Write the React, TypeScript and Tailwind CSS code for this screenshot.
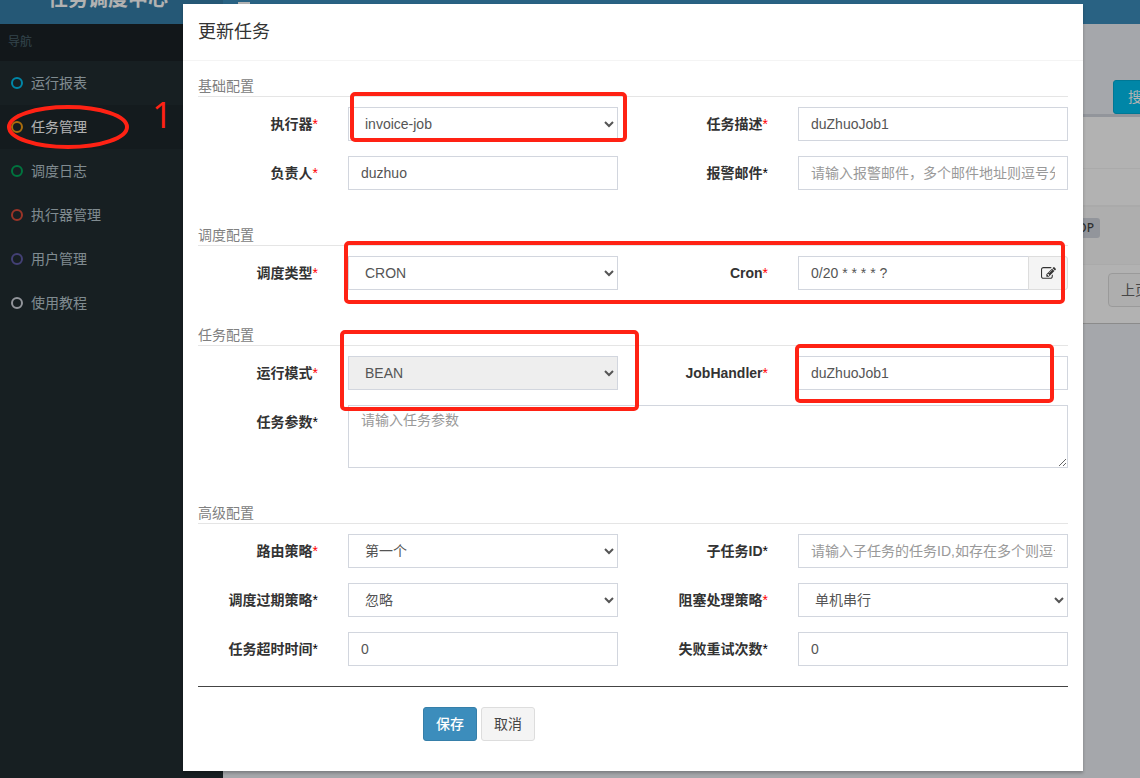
import React, { useState } from 'react';

const controlClass =
  'block w-full h-[34px] border border-[#d2d6de] bg-white px-3 py-1.5 text-sm leading-5 text-[#555] placeholder:text-[#999] placeholder:opacity-100 outline-none disabled:bg-[#eee] disabled:opacity-100';

const menuItems = [
  { label: '运行报表', color: 'border-[#00c0ef]' },
  { label: '任务管理', color: 'border-[#f39c12]', active: true },
  { label: '调度日志', color: 'border-[#00a65a]' },
  { label: '执行器管理', color: 'border-[#dd4b39]' },
  { label: '用户管理', color: 'border-[#605ca8]' },
  { label: '使用教程', color: 'border-[#d2d6de]' },
];

// Red hand-drawn frame laid over a control or a row
const Mark = ({ className }: { className: string }) => (
  <span
    aria-hidden="true"
    className={`pointer-events-none absolute z-10 rounded-[5px] border-4 border-[#ff2214] ${className}`}
  />
);

type FieldProps = {
  id: string;
  label: string;
  required?: boolean;
  wide?: boolean;
  mark?: string;
  children: React.ReactNode;
};

const Field = ({ id, label, required, wide, mark, children }: FieldProps) => (
  <>
    <label
      htmlFor={id}
      className="col-span-2 px-[15px] pt-[7px] text-right font-bold leading-5 text-[#333] whitespace-nowrap"
    >
      {label}
      <span className={`font-normal ${required ? 'text-[red]' : 'text-black'}`}>*</span>
    </label>
    <div className={`px-[15px] ${wide ? 'col-span-10' : 'col-span-4'}`}>
      <div className="relative">
        {children}
        {mark && <Mark className={mark} />}
      </div>
    </div>
  </>
);

const Row = ({ children }: { children: React.ReactNode }) => (
  <div className="relative -mx-[15px] mb-[15px] grid grid-cols-12">{children}</div>
);

const Section = ({ title, children }: { title: string; children: React.ReactNode }) => (
  <section className="pb-5">
    <h5 className="mb-2.5 border-b border-[#e5e5e5] text-sm leading-5 text-[#808080]">{title}</h5>
    {children}
  </section>
);

const EditIcon = () => (
  <svg viewBox="0 0 1792 1792" className="size-[15px] fill-[#333]" aria-hidden="true">
    <path d="M888 1184l116-116-152-152-116 116v56h96v96h56zm440-720q-16-16-33 1l-350 350q-17 17-1 33t33-1l350-350q17-17 1-33zm80 594v190q0 119-84.5 203.5t-203.5 84.5h-832q-119 0-203.5-84.5t-84.5-203.5v-832q0-119 84.5-203.5t203.5-84.5h832q63 0 117 25 15 7 18 23 3 17-9 29l-49 49q-14 14-32 8-23-6-45-6h-832q-66 0-113 47t-47 113v832q0 66 47 113t113 47h832q66 0 113-47t47-113v-126q0-13 9-22l64-64q15-15 35-7t20 29zm-96-738l288 288-672 672h-288v-288zm444 132l-92 92-288-288 92-92q28-28 68-28t68 28l152 152q28 28 28 68t-28 68z" />
  </svg>
);

const Sidebar = () => (
  <aside className="w-[223px] shrink-0 bg-[#222d32]">
    <div className="bg-[#1a2226] px-2 py-2.5 text-xs leading-[17px] text-[#4b646f]">导航</div>
    <nav>
      {menuItems.map((item) => (
        <a
          key={item.label}
          href="#"
          className={`flex h-11 items-center gap-2 pl-[11px] text-sm ${
            item.active ? 'bg-[#1e282c] text-white' : 'text-[#b8c7ce]'
          }`}
        >
          <span className={`size-3 rounded-full border-2 ${item.color}`} />
          {item.label}
        </a>
      ))}
    </nav>
  </aside>
);

// Job list behind the dialog
const JobList = () => (
  <main className="min-w-0 flex-1 overflow-hidden bg-[#ecf0f5] pt-14 pl-[15px]">
    <div className="flex justify-end">
      <button className="-mr-[93px] h-[34px] w-[120px] shrink-0 rounded-[3px] border border-[#00acd6] bg-[#00c0ef] px-3.5 text-left text-sm text-white">
        搜索
      </button>
    </div>
    <div className="border-t-[3px] border-b border-t-[#d2d6de] border-b-[#c8c8c8] bg-white">
      <div className="h-[52px] border-b border-[#f4f4f4]" />
      <div className="h-[38px] border-b-2 border-[#f4f4f4]" />
      <div className="flex h-[58px] items-start justify-end border-b border-[#f4f4f4] bg-[#f9f9f9] pt-[11px] pr-10">
        <span className="rounded-[3px] bg-[#d2d6de] px-1.5 font-['Noto_Sans',sans-serif] text-xs leading-5 font-medium text-[#444]">
          STOP
        </span>
      </div>
      <div className="flex justify-end pt-2 pb-4">
        <button className="-mr-[30px] h-[34px] w-[62px] shrink-0 rounded-[4px] border border-[#ddd] bg-[#fafafa] px-3 text-left text-sm whitespace-nowrap text-[#666]">
          上页
        </button>
      </div>
    </div>
  </main>
);

const JobDialog = () => {
  const [executor, setExecutor] = useState('invoice-job');
  const [schedule, setSchedule] = useState('CRON');

  return (
    <div
      role="dialog"
      aria-labelledby="dialog-title"
      className="mt-1 mr-[57px] ml-[183px] min-w-0 flex-1 self-start bg-white shadow-[0_2px_3px_rgba(0,0,0,0.25)]"
    >
      <div className="border-b border-[#f4f4f4] p-[15px]">
        <h4 id="dialog-title" className="text-lg leading-[26px] text-[#333]">
          更新任务
        </h4>
      </div>

      <form className="p-[15px] pb-[30px]" onSubmit={(e) => e.preventDefault()}>
        <Section title="基础配置">
          <Row>
            <Field id="executor" label="执行器" required mark="-top-[15px] -right-[9px] -bottom-px left-[2px]">
              <select
                id="executor"
                className={controlClass}
                value={executor}
                onChange={(e) => setExecutor(e.target.value)}
              >
                <option>invoice-job</option>
              </select>
            </Field>
            <Field id="desc" label="任务描述" required>
              <input id="desc" className={controlClass} defaultValue="duZhuoJob1" />
            </Field>
          </Row>
          <Row>
            <Field id="author" label="负责人" required>
              <input id="author" className={controlClass} defaultValue="duzhuo" />
            </Field>
            <Field id="email" label="报警邮件">
              <input id="email" className={controlClass} placeholder="请输入报警邮件，多个邮件地址则逗号分隔" />
            </Field>
          </Row>
        </Section>

        <Section title="调度配置">
          <Row>
            <Field id="schedule" label="调度类型" required>
              <select
                id="schedule"
                className={controlClass}
                value={schedule}
                onChange={(e) => setSchedule(e.target.value)}
              >
                <option>CRON</option>
              </select>
            </Field>
            <Field id="cron" label="Cron" required>
              <div className="flex">
                <input id="cron" className={`${controlClass} min-w-0 flex-1`} defaultValue="0/20 * * * * ?" />
                <button
                  type="button"
                  aria-label="编辑 Cron"
                  className="-ml-px flex w-10 shrink-0 items-center justify-center rounded-r-[3px] border border-[#ddd] bg-[#f4f4f4]"
                >
                  <EditIcon />
                </button>
              </div>
            </Field>
            <Mark className="-top-[15px] right-[18px] -bottom-[14px] left-[161px]" />
          </Row>
        </Section>

        <Section title="任务配置">
          <Row>
            <Field id="mode" label="运行模式" required mark="-top-[26px] -right-[21px] -bottom-[21px] -left-2">
              <select id="mode" className={controlClass} disabled>
                <option>BEAN</option>
              </select>
            </Field>
            <Field id="handler" label="JobHandler" required mark="-top-3 right-[14px] -bottom-[13px] -left-[3px]">
              <input id="handler" className={controlClass} defaultValue="duZhuoJob1" />
            </Field>
          </Row>
          <Row>
            <Field id="param" label="任务参数" wide>
              <textarea id="param" className={`${controlClass} h-[63px] pt-1`} placeholder="请输入任务参数" />
            </Field>
          </Row>
        </Section>

        <Section title="高级配置">
          <Row>
            <Field id="route" label="路由策略" required>
              <select id="route" className={controlClass}>
                <option>第一个</option>
              </select>
            </Field>
            <Field id="child" label="子任务ID">
              <input id="child" className={controlClass} placeholder="请输入子任务的任务ID,如存在多个则逗号分隔" />
            </Field>
          </Row>
          <Row>
            <Field id="misfire" label="调度过期策略">
              <select id="misfire" className={controlClass}>
                <option>忽略</option>
              </select>
            </Field>
            <Field id="block" label="阻塞处理策略" required>
              <select id="block" className={controlClass}>
                <option>单机串行</option>
              </select>
            </Field>
          </Row>
          <Row>
            <Field id="timeout" label="任务超时时间">
              <input id="timeout" className={controlClass} defaultValue="0" />
            </Field>
            <Field id="retry" label="失败重试次数">
              <input id="retry" className={controlClass} defaultValue="0" />
            </Field>
          </Row>
        </Section>

        <hr className="-mt-[15px] mb-5 border-[#444]" />
        <div className="-mx-[15px] grid grid-cols-4">
          <div className="col-span-3 col-start-2 flex gap-1 px-[15px]">
            <button
              type="submit"
              className="h-[34px] w-[54px] rounded-[3px] border border-[#367fa9] bg-[#3c8dbc] text-sm font-medium text-white"
            >
              保存
            </button>
            <button
              type="button"
              className="h-[34px] w-[54px] rounded-[3px] border border-[#ddd] bg-[#f4f4f4] text-sm text-[#444]"
            >
              取消
            </button>
          </div>
        </div>
      </form>
    </div>
  );
};

const App = () => (
  <div className="relative h-screen overflow-hidden font-['Liberation_Sans','Noto_Sans_CJK_SC',sans-serif] text-sm">
    <div className="flex h-full flex-col">
      {/* The page is scrolled, only the lower half of the top bar shows */}
      <header className="-mt-[26px] flex h-[50px] shrink-0 bg-[#3c8dbc] text-white">
        <div className="flex w-[223px] items-center justify-center bg-[#367fa9] pr-[7px] text-xl font-bold">
          任务调度中心
        </div>
        <button aria-label="菜单" className="flex flex-col justify-center gap-0.5 px-[15px]">
          <span className="h-0.5 w-3 bg-white" />
          <span className="h-0.5 w-3 bg-white" />
          <span className="h-0.5 w-3 bg-white" />
        </button>
      </header>
      <div className="flex min-h-0 flex-1">
        <Sidebar />
        <JobList />
      </div>
    </div>

    <div className="absolute inset-0 flex bg-black/30">
      <JobDialog />
    </div>

    {/* Step marker on the sidebar */}
    <svg className="pointer-events-none absolute top-[102px] left-[6px] h-12 w-[124px]" viewBox="0 0 124 48" fill="none" aria-hidden="true">
      <ellipse cx="62" cy="25" rx="59" ry="20" stroke="#ff2214" strokeWidth="4" />
    </svg>
    <span className="pointer-events-none absolute top-[95px] left-[152px] font-['Open_Sans',sans-serif] text-4xl leading-10 text-[#ff2214]">
      1
    </span>
  </div>
);

export default App;
